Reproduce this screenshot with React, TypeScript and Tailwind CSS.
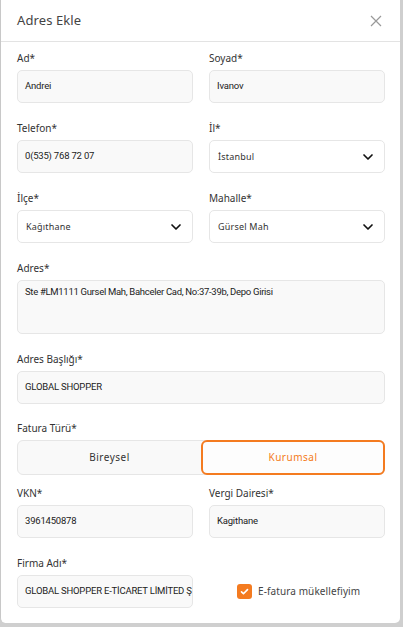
import React, { useState } from "react";

const font = { fontFamily: '"Noto Sans", "Open Sans", sans-serif' };
const valueFont = { fontFamily: 'Roboto, "Noto Sans", sans-serif' };

function Label({ children }: { children: React.ReactNode }) {
  return (
    <div className="mb-[5px] h-[14px] text-[10px] leading-[14px] text-[#333]">
      {children}
    </div>
  );
}

function TextInput({ label, value }: { label: string; value: string }) {
  return (
    <div className="flex flex-col">
      <Label>{label}</Label>
      <div
        className="flex h-[33px] items-center overflow-hidden whitespace-nowrap rounded-[5px] border border-[#e6e6e6] bg-[#f9f9f9] px-[7px] text-[9.5px] tracking-[-0.2px] text-[#222]"
        style={valueFont}
      >
        {value}
      </div>
    </div>
  );
}

function SelectInput({ label, value }: { label: string; value: string }) {
  return (
    <div className="flex flex-col">
      <Label>{label}</Label>
      <div className="flex h-[33px] items-center justify-between rounded-[5px] border border-[#e6e6e6] bg-white pl-[8px] pr-[10px] text-[9px] tracking-[0.2px] text-[#333]">
        <span>{value}</span>
        <svg className="h-[12px] w-[12px]" viewBox="0 0 24 24" fill="none" stroke="#111" strokeWidth="3.4" strokeLinecap="round" strokeLinejoin="round">
          <path d="M4 8l8 8 8-8" />
        </svg>
      </div>
    </div>
  );
}

export default function App() {
  const [type, setType] = useState<"b" | "k">("k");
  const [efatura, setEfatura] = useState(true);

  return (
    <div className="flex h-[627px] w-[403px] bg-[#cfcfcf]" style={font}>
      <div className="flex h-[623px] w-[400px] flex-col rounded-b-[5px] border-l border-[#c8c8c8] bg-white">
        <div className="flex h-[42px] shrink-0 items-center justify-between border-b border-[#e3e3e3] pl-4 pr-[18px]">
          <span className="text-[13px] tracking-[0.1px] text-[#444]">Adres Ekle</span>
          <svg className="h-[12px] w-[12px]" viewBox="0 0 12 12" stroke="#999" strokeWidth="1.2">
            <path d="M1 1l10 10M11 1L1 11" />
          </svg>
        </div>

        <div className="flex flex-col gap-[18px] pl-4 pr-[15px] pt-[9px]">
          <div className="grid grid-cols-2 gap-x-4">
            <TextInput label="Ad*" value="Andrei" />
            <TextInput label="Soyad*" value="Ivanov" />
          </div>
          <div className="grid grid-cols-2 gap-x-4">
            <TextInput label="Telefon*" value="0(535) 768 72 07" />
            <SelectInput label="İl*" value="İstanbul" />
          </div>
          <div className="grid grid-cols-2 gap-x-4">
            <SelectInput label="İlçe*" value="Kağıthane" />
            <SelectInput label="Mahalle*" value="Gürsel Mah" />
          </div>
          <div className="flex flex-col">
            <Label>Adres*</Label>
            <div
              className="h-[54px] rounded-[5px] border border-[#e6e6e6] bg-[#f9f9f9] px-[7px] pt-[4px] text-[9.5px] tracking-[-0.3px] text-[#222]"
              style={valueFont}
            >
              Ste #LM1111 Gursel Mah, Bahceler Cad, No:37-39b, Depo Girisi
            </div>
          </div>
          <TextInput label="Adres Başlığı*" value="GLOBAL SHOPPER" />

          <div className="-mt-[1px] mb-[-7px] flex flex-col">
            <Label>Fatura Türü*</Label>
            <div className="grid h-[35px] grid-cols-2 rounded-[6px] border border-[#e6e6e6] bg-[#f9f9f9]">
              <button
                className={`-my-px rounded-[6px] text-[10px] tracking-[0.5px] ${type === "b" ? "border-2 border-[#f47b20] bg-white text-[#f47b20]" : "text-[#333]"}`}
                onClick={() => setType("b")}
              >
                Bireysel
              </button>
              <button
                className={`-my-px -mr-px rounded-[6px] text-[10px] tracking-[0.5px] ${type === "k" ? "border-2 border-[#f47b20] bg-[#fdfdfd] text-[#f47b20]" : "text-[#333]"}`}
                onClick={() => setType("k")}
              >
                Kurumsal
              </button>
            </div>
          </div>

          <div className="grid grid-cols-2 gap-x-4">
            <TextInput label="VKN*" value="3961450878" />
            <TextInput label="Vergi Dairesi*" value="Kagithane" />
          </div>
          <div className="grid grid-cols-2 gap-x-4">
            <TextInput label="Firma Adı*" value="GLOBAL SHOPPER E-TİCARET LİMİTED Şİ" />
            <label className="mt-[19px] flex cursor-pointer items-center gap-[6px] pl-[28px]" onClick={() => setEfatura(!efatura)}>
              <span className={`flex h-[15px] w-[15px] items-center justify-center rounded-[3px] ${efatura ? "bg-[#f47b20]" : "border border-[#ccc] bg-white"}`}>
                {efatura && (
                  <svg className="h-[9px] w-[9px]" viewBox="0 0 12 12" fill="none" stroke="#fff" strokeWidth="2.2" strokeLinecap="round" strokeLinejoin="round">
                    <path d="M2 6.5l2.6 2.5L10 3.5" />
                  </svg>
                )}
              </span>
              <span className="text-[10px] tracking-[0.1px] text-[#444]">E-fatura mükellefiyim</span>
            </label>
          </div>
        </div>
      </div>
    </div>
  );
}
